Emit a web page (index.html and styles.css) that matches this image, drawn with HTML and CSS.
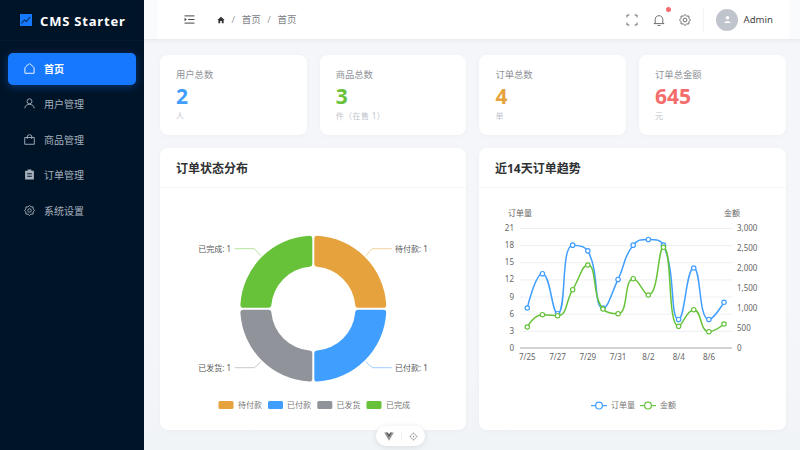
FILE: index.html
```html
<!DOCTYPE html>
<html lang="zh-CN">
  <head>
    <meta charset="UTF-8" />
    <title>CMS Starter</title>
    <link rel="stylesheet" href="styles.css">
  </head>

  <body>
    <div class="layout">
      <!-- 侧边栏 -->
      <aside class="sidebar">
        <div class="logo">
          <svg class="logo-icon" viewBox="0 0 12 12">
            <rect width="12" height="12" fill="#1677ff" />
            <path d="M1.5 9.5 L4.5 6 L6.5 7.5 L10 3" fill="none" stroke="#0b2a52" stroke-width="1.1" />
          </svg>
          <span>CMS Starter</span>
        </div>
        <nav class="menu">
          <a class="menu-item active">
            <svg viewBox="0 0 12 12"><path d="M1 5.2 C2 3.6 4.4 1.8 6 0.8 C7.6 1.8 10 3.6 11 5.2 V11.2 H1 Z" /></svg>
            <span>首页</span>
          </a>
          <a class="menu-item">
            <svg viewBox="0 0 12 12"><circle cx="6" cy="3.6" r="2.7" /><path d="M1 11.2 C1 8.4 3 7 6 7 S11 8.4 11 11.2" /></svg>
            <span>用户管理</span>
          </a>
          <a class="menu-item">
            <svg viewBox="0 0 12 12"><path d="M0.8 3.8 H11.2 V11.2 H0.8 Z M3.6 5.4 V2.2 C3.6 0.3 8.4 0.3 8.4 2.2 V5.4" /></svg>
            <span>商品管理</span>
          </a>
          <a class="menu-item">
            <svg viewBox="0 0 12 12"><path class="solid" d="M4 0.6 H8 V1.8 H10.8 V11.4 H1.2 V1.8 H4 Z M3.5 4.6 V5.7 H8.5 V4.6 Z M3.5 7.4 V8.5 H8.5 V7.4 Z" /></svg>
            <span>订单管理</span>
          </a>
          <a class="menu-item">
            <svg viewBox="0 0 12 12"><circle cx="6" cy="6" r="1.9" /><path class="cog" d="M6 0.5 L7.65 2.03 L9.9 2.1 L9.97 4.35 L11.5 6 L9.97 7.65 L9.9 9.9 L7.65 9.97 L6 11.5 L4.35 9.97 L2.1 9.9 L2.03 7.65 L0.5 6 L2.03 4.35 L2.1 2.1 L4.35 2.03 Z" /></svg>
            <span>系统设置</span>
          </a>
        </nav>
      </aside>

      <div class="main">
        <!-- 顶部栏 -->
        <header class="topbar">
          <div class="topbar-left">
            <svg class="fold" viewBox="0 0 12 10"><path d="M0.5 1 H11.5 M4.5 5 H11.5 M0.5 9 H11.5" /><path class="solid" d="M0.5 3 L3 5 L0.5 7 Z" /></svg>
            <div class="crumbs">
              <svg class="home" viewBox="0 0 12 12"><path d="M6 1 L11.5 6 H10 V11 H7.2 V7.6 H4.8 V11 H2 V6 H0.5 Z" /></svg>
              <i>/</i><span>首页</span><i>/</i><span>首页</span>
            </div>
          </div>
          <div class="topbar-right">
            <svg class="tool" viewBox="0 0 12 12"><path d="M1 3.5 V1 H3.5 M8.5 1 H11 V3.5 M11 8.5 V11 H8.5 M3.5 11 H1 V8.5" /></svg>
            <div class="bell">
              <svg class="tool" viewBox="0 0 12 12"><path d="M0.8 9.6 H11.2 M2.2 9.6 V5.5 C2.2 0.4 9.8 0.4 9.8 5.5 V9.6 M4.6 11.5 H7.4" /></svg>
              <b class="dot"></b>
            </div>
            <svg class="tool" viewBox="0 0 12 12"><circle cx="6" cy="6" r="1.9" /><path class="cog" d="M6 0.5 L7.65 2.03 L9.9 2.1 L9.97 4.35 L11.5 6 L9.97 7.65 L9.9 9.9 L7.65 9.97 L6 11.5 L4.35 9.97 L2.1 9.9 L2.03 7.65 L0.5 6 L2.03 4.35 L2.1 2.1 L4.35 2.03 Z" /></svg>
            <div class="user">
              <div class="avatar">
                <svg viewBox="0 0 12 12"><circle cx="6" cy="3.6" r="2.4" /><path d="M1.8 10.6 C1.8 7.6 10.2 7.6 10.2 10.6 Z" /></svg>
              </div>
              <span>Admin</span>
            </div>
          </div>
        </header>

        <div class="content">
          <!-- 统计卡片 -->
          <section class="stats">
            <div class="stat">
              <p class="stat-name">用户总数</p>
              <p class="stat-num blue">2</p>
              <p class="stat-unit">人</p>
            </div>
            <div class="stat">
              <p class="stat-name">商品总数</p>
              <p class="stat-num green">3</p>
              <p class="stat-unit">件（在售 1）</p>
            </div>
            <div class="stat">
              <p class="stat-name">订单总数</p>
              <p class="stat-num orange">4</p>
              <p class="stat-unit">单</p>
            </div>
            <div class="stat">
              <p class="stat-name">订单总金额</p>
              <p class="stat-num red">645</p>
              <p class="stat-unit">元</p>
            </div>
          </section>

          <!-- 图表 -->
          <section class="charts">
            <div class="panel">
              <h4>订单状态分布</h4>
              <svg class="chart" viewBox="160 188 306 242">
                <g transform="translate(313.3 308.7)">
                  <path fill="#e6a23c" d="M1 -45 V-70 Q1 -73 4 -72.9 A73 73 0 0 1 72.9 -4 Q73 -1 70 -1 H45 Q42 -1 41.9 -4 A42 42 0 0 0 4 -41.9 Q1 -42 1 -45 Z" />
                  <path fill="#409eff" transform="rotate(90)" d="M1 -45 V-70 Q1 -73 4 -72.9 A73 73 0 0 1 72.9 -4 Q73 -1 70 -1 H45 Q42 -1 41.9 -4 A42 42 0 0 0 4 -41.9 Q1 -42 1 -45 Z" />
                  <path fill="#909399" transform="rotate(180)" d="M1 -45 V-70 Q1 -73 4 -72.9 A73 73 0 0 1 72.9 -4 Q73 -1 70 -1 H45 Q42 -1 41.9 -4 A42 42 0 0 0 4 -41.9 Q1 -42 1 -45 Z" />
                  <path fill="#67c23a" transform="rotate(270)" d="M1 -45 V-70 Q1 -73 4 -72.9 A73 73 0 0 1 72.9 -4 Q73 -1 70 -1 H45 Q42 -1 41.9 -4 A42 42 0 0 0 4 -41.9 Q1 -42 1 -45 Z" />
                </g>
                <g class="leaders">
                  <path stroke="#e6a23c" d="M365.7 255.7 L372.3 248.7 H391.7" />
                  <path stroke="#409eff" d="M365.7 361.7 L372.3 367.7 H391.7" />
                  <path stroke="#909399" d="M260.9 361.7 L254.3 367.7 H234.7" />
                  <path stroke="#67c23a" d="M260.9 255.7 L254.3 248.7 H234.7" />
                </g>
                <g class="pie-label">
                  <text x="395" y="251.6">待付款: 1</text>
                  <text x="395" y="370.6">已付款: 1</text>
                  <text x="231" y="370.6" text-anchor="end">已发货: 1</text>
                  <text x="231" y="251.6" text-anchor="end">已完成: 1</text>
                </g>
                <g class="legend">
                  <rect x="218.5" y="401" width="15" height="8" rx="1.5" fill="#e6a23c" /><text x="238" y="407.6">待付款</text>
                  <rect x="268" y="401" width="15" height="8" rx="1.5" fill="#409eff" /><text x="287" y="407.6">已付款</text>
                  <rect x="317.3" y="401" width="15" height="8" rx="1.5" fill="#909399" /><text x="336.5" y="407.6">已发货</text>
                  <rect x="366.5" y="401" width="15" height="8" rx="1.5" fill="#67c23a" /><text x="386" y="407.6">已完成</text>
                </g>
              </svg>
            </div>

            <div class="panel">
              <h4>近14天订单趋势</h4>
              <svg class="chart" id="trend" viewBox="479 188 306 242">
                <g class="grid">
                  <path d="M520 228.5 H732 M520 245.6 H732 M520 262.7 H732 M520 279.9 H732 M520 297 H732 M520 314.2 H732 M520 331.3 H732" />
                </g>
                <path class="axis" d="M520 348 H732" />
                <g class="tick">
                  <text x="520" y="216" text-anchor="middle">订单量</text>
                  <text x="732" y="216" text-anchor="middle">金额</text>
                  <g text-anchor="end">
                    <text x="514" y="231">21</text><text x="514" y="248">18</text>
                    <text x="514" y="265">15</text><text x="514" y="282">12</text>
                    <text x="514" y="300">9</text><text x="514" y="317">6</text>
                    <text x="514" y="334">3</text><text x="514" y="350.5">0</text>
                  </g>
                  <g>
                    <text x="737" y="231">3,000</text><text x="737" y="250.5">2,500</text>
                    <text x="737" y="270.5">2,000</text><text x="737" y="290.5">1,500</text>
                    <text x="737" y="310.5">1,000</text><text x="737" y="330.5">500</text>
                    <text x="737" y="350.5">0</text>
                  </g>
                  <g text-anchor="middle">
                    <text x="527.3" y="360">7/25</text><text x="557.6" y="360">7/27</text>
                    <text x="587.8" y="360">7/29</text><text x="618" y="360">7/31</text>
                    <text x="648.4" y="360">8/2</text><text x="678.7" y="360">8/4</text>
                    <text x="709" y="360">8/6</text>
                  </g>
                </g>
                <g class="legend">
                  <path d="M591 405.6 H607" stroke="#409eff" stroke-width="1.2" />
                  <circle cx="599" cy="405.6" r="3.4" fill="#fff" stroke="#409eff" stroke-width="1.2" />
                  <text x="611" y="408.3">订单量</text>
                  <path d="M640 405.6 H656" stroke="#67c23a" stroke-width="1.2" />
                  <circle cx="648" cy="405.6" r="3.4" fill="#fff" stroke="#67c23a" stroke-width="1.2" />
                  <text x="660" y="408.3">金额</text>
                </g>
              </svg>
            </div>
          </section>
        </div>
      </div>
    </div>

    <!-- 调试工具 -->
    <div class="devtools">
      <svg class="vue-logo" viewBox="0 0 12 11"><path class="vue-outer" d="M0 0.5 H4 L6 4 L8 0.5 H12 L6 10.8 Z" /><path class="vue-inner" d="M2.6 0.5 H4.4 L6 3.2 L7.6 0.5 H9.4 L6 6.4 Z" /></svg>
      <i></i>
      <svg viewBox="0 0 12 12"><circle cx="6" cy="6" r="3.8" /><circle class="solid" cx="6" cy="6" r="0.9" /><path d="M6 0.5 V2.2 M6 9.8 V11.5 M0.5 6 H2.2 M9.8 6 H11.5" /></svg>
    </div>

    <script src="chart.js"></script>
  </body>
</html>
```

FILE: styles.css
```css
* {
  box-sizing: border-box;
}

body {
  margin: 0;
  height: 450px;
  overflow: hidden;
  font-family: "Noto Sans", "Noto Sans CJK SC", sans-serif;
  background-color: #f5f6fa;
}

p,
h4 {
  margin: 0;
}

.layout {
  display: flex;
  height: 450px;
}

.sidebar {
  flex: 0 0 144px;
  background-color: #001428;
}

.logo {
  display: flex;
  align-items: center;
  gap: 8px;
  height: 41px;
  padding: 0 0 0 20px;
  border-bottom: 1px solid #04192e;
  color: #fff;
  font-size: 13px;
  font-weight: 700;
  letter-spacing: 0.8px;
}

.logo span {
  margin-top: 2px;
}

.logo-icon {
  width: 12px;
  height: 12px;
}

.menu {
  padding: 12px 8px;
}

.menu-item {
  display: flex;
  align-items: center;
  gap: 9px;
  height: 31.5px;
  margin-bottom: 4px;
  padding: 0 0 1.5px 16px;
  border-radius: 5px;
  color: #a6b0bc;
  font-size: 10px;
}

.menu-item svg {
  width: 11px;
  height: 11px;
  fill: none;
  stroke: currentColor;
  stroke-width: 1;
  stroke-linejoin: round;
}

.menu-item .solid {
  fill: currentColor;
  fill-rule: evenodd;
  stroke: none;
}

.menu-item.active {
  background-color: #1677ff;
  box-shadow: 0 2px 8px rgba(22, 119, 255, 0.35);
  color: #fff;
  font-weight: 700;
}

.main {
  flex: 1;
  min-width: 0;
  background: linear-gradient(#f5f6fa 70%, #f1f4f7);
}

.topbar {
  display: flex;
  align-items: center;
  justify-content: space-between;
  height: 39px;
  padding: 0 27px 0 40px;
  background: linear-gradient(to right, #fafbfc 14px, #fff 14px, #fff 645px, #fafbfc 645px);
  box-shadow: 0 1px 5px rgba(0, 21, 41, 0.08);
}

.topbar-left,
.topbar-right,
.crumbs,
.user {
  display: flex;
  align-items: center;
}

.topbar-left {
  gap: 22px;
}

.fold {
  width: 11px;
  height: 9px;
  fill: none;
  stroke: #444;
  stroke-width: 1.1;
}

.fold .solid {
  fill: #444;
  stroke: none;
}

.crumbs {
  gap: 6.6px;
  padding-bottom: 1px;
  color: #7a7d83;
  font-size: 9.5px;
}

.crumbs i {
  color: #9a9da3;
  font-style: normal;
}

.home {
  width: 8px;
  height: 8px;
  margin-top: 1px;
  fill: #333;
}

.topbar-right {
  gap: 14.5px;
}

.tool {
  display: block;
  width: 12px;
  height: 12px;
  fill: none;
  stroke: #555;
  stroke-width: 0.85;
  stroke-linejoin: round;
}

.bell {
  position: relative;
}

.dot {
  position: absolute;
  top: -7px;
  right: -6.5px;
  width: 5px;
  height: 5px;
  border-radius: 50%;
  background-color: #f56c6c;
}

.user {
  gap: 5.5px;
  height: 24px;
  margin-left: -2.5px;
  padding-left: 12px;
  border-left: 1px solid #f3f4f6;
  color: #444;
  font-size: 9.6px;
}

.avatar {
  display: flex;
  align-items: center;
  justify-content: center;
  width: 22px;
  height: 22px;
  border-radius: 50%;
  background-color: #c0c4cc;
}

.avatar svg {
  width: 9px;
  height: 9px;
  fill: #fff;
}

.content {
  padding: 16px 14px 0 16px;
}

.stats {
  display: grid;
  grid-template-columns: repeat(4, 146.5px);
  gap: 13.2px;
}

.stat {
  height: 80px;
  padding: 13px 16px 0;
  border-radius: 8px;
  background-color: #fff;
  box-shadow: 0 1px 5px rgba(0, 21, 41, 0.03);
}

.stat-name {
  color: #909399;
  font-size: 9.3px;
  line-height: 14px;
}

.stat-num {
  font-size: 21px;
  font-weight: 700;
  line-height: 28px;
}

.stat-unit {
  color: #c0c4cc;
  font-size: 8px;
  line-height: 12px;
  letter-spacing: 0.4px;
}

.blue {
  color: #409eff;
}

.green {
  color: #67c23a;
}

.orange {
  color: #e6a23c;
}

.red {
  color: #f56c6c;
}

.charts {
  display: grid;
  grid-template-columns: 306px 306.5px;
  gap: 13px;
  margin-top: 13px;
}

.panel {
  height: 281.5px;
  border-radius: 8px;
  background-color: #fff;
  box-shadow: 0 1px 5px rgba(0, 21, 41, 0.03);
  overflow: hidden;
}

.panel h4 {
  height: 40px;
  padding-left: 16px;
  border-bottom: 1px solid #f5f6f8;
  color: #303133;
  font-size: 12px;
  font-weight: 700;
  line-height: 42px;
}

.chart {
  display: block;
  width: 306px;
  height: 242px;
}

.chart text {
  font-family: "Noto Sans", "Noto Sans CJK SC", sans-serif;
}

.leaders path {
  fill: none;
  stroke-width: 0.7;
  opacity: 0.7;
}

.pie-label text {
  fill: #555;
  font-size: 8px;
}

.legend text {
  fill: #777;
  font-size: 8px;
}

.grid path {
  fill: none;
  stroke: #e6e8ee;
  stroke-width: 0.7;
}

.axis {
  fill: none;
  stroke: #909399;
  stroke-width: 0.8;
}

.tick text {
  fill: #666;
  font-size: 8px;
}

.line {
  fill: none;
  stroke-width: 1.5;
}

.devtools {
  position: absolute;
  left: 376px;
  top: 426px;
  display: flex;
  align-items: center;
  justify-content: center;
  gap: 7px;
  width: 49px;
  height: 20px;
  border-radius: 10px;
  background-color: #fff;
  box-shadow: 0 1px 6px rgba(0, 0, 0, 0.1);
}

.devtools svg {
  width: 9px;
  height: 9px;
  fill: none;
  stroke: #888;
  stroke-width: 0.8;
}

.devtools .vue-logo {
  width: 10px;
  stroke: none;
}

.vue-outer {
  fill: #999;
}

.vue-inner {
  fill: #555;
}

.devtools .solid {
  fill: #888;
  stroke: none;
}

.devtools i {
  width: 1px;
  height: 8px;
  background-color: #eee;
}
```

FILE: chart.js
```js
// 近14天数据
const orders = [7, 13, 6, 18, 17, 7, 12, 18, 19, 18, 5, 14, 5, 8]
const amounts = [525, 833, 808, 1458, 2075, 975, 858, 1733, 1325, 2517, 542, 958, 408, 600]

const svg = document.getElementById('trend')
const NS = 'http://www.w3.org/2000/svg'
const SMOOTH = 0.5

function toPoints(data, max) {
  return data.map((v, i) => [527.3 + i * 15.13, 348 - (v / max) * 120])
}

const clamp = (v, a, b) => Math.max(Math.min(v, Math.max(a, b)), Math.min(a, b))

// 平滑曲线，控制点不越过相邻的点
function smoothPath(pts) {
  let d = `M${pts[0][0]} ${pts[0][1]}`
  let cp0 = pts[0]
  for (let i = 1; i < pts.length; i++) {
    const [x, y] = pts[i]
    const prev = pts[i - 1]
    const next = pts[i + 1]
    if (next) {
      const len0 = Math.hypot(x - prev[0], y - prev[1])
      const len1 = Math.hypot(next[0] - x, next[1] - y)
      const ratio = len1 / (len0 + len1)
      let nx = clamp(x + (next[0] - prev[0]) * SMOOTH * ratio, next[0], x)
      let ny = clamp(y + (next[1] - prev[1]) * SMOOTH * ratio, next[1], y)
      const px = clamp(x - ((nx - x) * len0) / len1, prev[0], x)
      const py = clamp(y - ((ny - y) * len0) / len1, prev[1], y)
      nx = x + ((x - px) * len1) / len0
      ny = y + ((y - py) * len1) / len0
      d += ` C${cp0[0]} ${cp0[1]} ${px} ${py} ${x} ${y}`
      cp0 = [nx, ny]
    } else {
      d += ` C${cp0[0]} ${cp0[1]} ${x} ${y} ${x} ${y}`
    }
  }
  return d
}

function drawLine(data, max, color) {
  const pts = toPoints(data, max)
  const line = document.createElementNS(NS, 'path')
  line.setAttribute('class', 'line')
  line.setAttribute('stroke', color)
  line.setAttribute('d', smoothPath(pts))
  svg.appendChild(line)
  pts.forEach(([x, y]) => {
    const dot = document.createElementNS(NS, 'circle')
    dot.setAttribute('cx', x)
    dot.setAttribute('cy', y)
    dot.setAttribute('r', 2.2)
    dot.setAttribute('fill', '#fff')
    dot.setAttribute('stroke', color)
    dot.setAttribute('stroke-width', 1.2)
    svg.appendChild(dot)
  })
}

drawLine(orders, 21, '#409eff')
drawLine(amounts, 3000, '#67c23a')
```
